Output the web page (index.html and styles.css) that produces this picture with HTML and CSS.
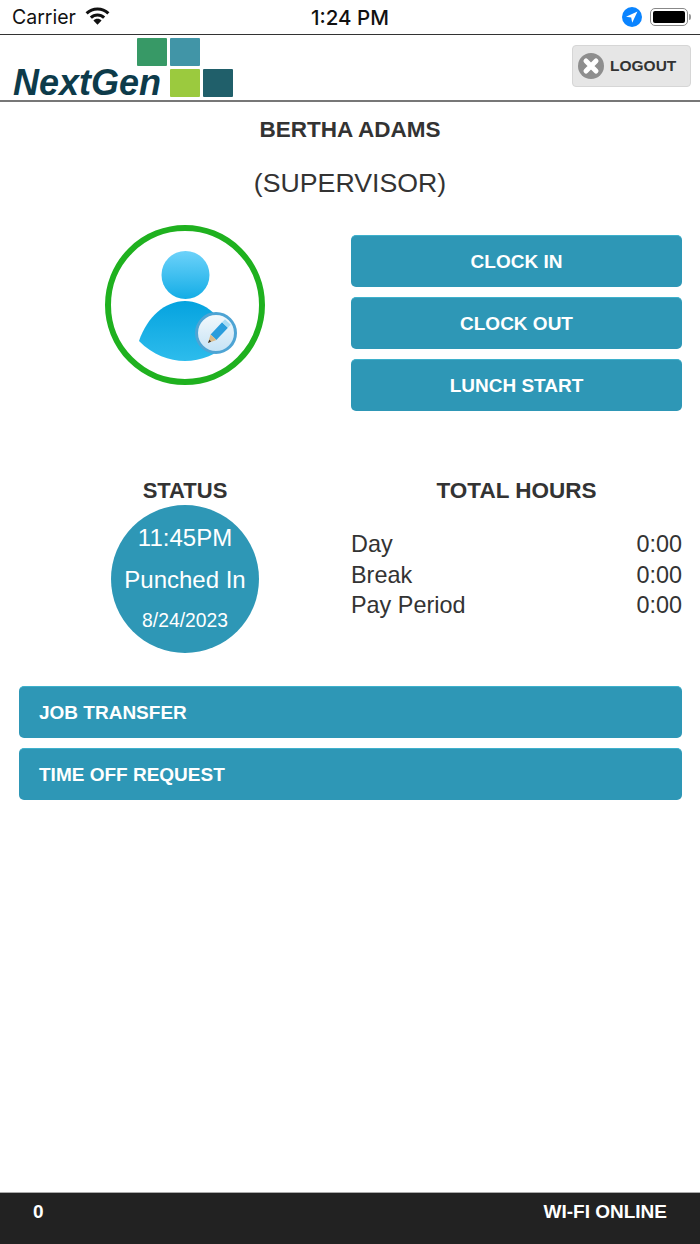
FILE: index.html
```html
<!doctype html>
<html lang="en">

<head>
    <meta charset="UTF-8" />
    <meta name="viewport" content="width=device-width, initial-scale=1.0" />
    <title>NextGen - Time Clock</title>
    <link rel="stylesheet" href="styles.css">
</head>

<body>
    <div class="app">
        <!-- Status bar -->
        <div class="status-bar">
            <div class="status-left">
                <span>Carrier</span>
                <svg class="wifi" viewBox="0 0 26 19" width="25" height="18">
                    <path d="M1.500 6.800A16.500 16.500 0 0 1 24.500 6.800" fill="none" stroke="#111" stroke-width="3.200" />
                    <path d="M6 11.200A10 10 0 0 1 20 11.200" fill="none" stroke="#111" stroke-width="3.200" />
                    <path d="M13 12.500c1.700 0 3.200.600 4.300 1.700L13 18.800l-4.300-4.600c1.100-1.100 2.600-1.700 4.300-1.700z" fill="#111" />
                </svg>
            </div>
            <div class="status-time">1:24 PM</div>
            <div class="status-right">
                <svg class="location" viewBox="0 0 20 20" width="20" height="20">
                    <circle cx="10" cy="10" r="10" fill="#0a84ff" />
                    <path d="M15.500 4.500L4 9.700l5.200.9 1 5.200z" fill="#fff" />
                </svg>
                <div class="battery">
                    <div class="battery-level"></div>
                </div>
                <div class="battery-cap"></div>
            </div>
        </div>

        <!-- Header -->
        <div class="app-header">
            <div class="logo">
                <div class="logo-name">NextGen</div>
                <div class="logo-blocks">
                    <span class="block block-green"></span>
                    <span class="block block-blue"></span>
                    <span class="block block-lime"></span>
                    <span class="block block-teal"></span>
                </div>
            </div>
            <button class="logout-button">
                <svg viewBox="0 0 26 26" width="26" height="26">
                    <circle cx="13" cy="13" r="13" fill="#8e8e8e" />
                    <path d="M8 8l10 10M18 8L8 18" stroke="#fff" stroke-width="5" stroke-linecap="round" />
                </svg>
                LOGOUT
            </button>
        </div>

        <!-- Employee -->
        <div class="employee-name">BERTHA ADAMS</div>
        <div class="employee-role">(SUPERVISOR)</div>

        <div class="clock-row">
            <div class="side-col">
                <div class="avatar">
                    <svg viewBox="0 0 160 160" width="160" height="160">
                        <defs>
                            <linearGradient id="headFill" x1="0" y1="0" x2="0" y2="1">
                                <stop offset="0" stop-color="#6dd2fa" />
                                <stop offset="1" stop-color="#14ade6" />
                            </linearGradient>
                            <linearGradient id="bodyFill" x1="0" y1="0" x2="0" y2="1">
                                <stop offset="0" stop-color="#05a3df" />
                                <stop offset="1" stop-color="#2dbcec" />
                            </linearGradient>
                            <linearGradient id="badgeFill" x1="0" y1="0" x2="0" y2="1">
                                <stop offset="0" stop-color="#f4f9fc" />
                                <stop offset="1" stop-color="#c4e2f5" />
                            </linearGradient>
                        </defs>
                        <circle cx="80" cy="80" r="77" fill="none" stroke="#1fb11f" stroke-width="6" />
                        <circle cx="80.500" cy="50" r="24" fill="url(#headFill)" />
                        <path d="M34 116C42 92 60 76 80 76s38 16 46 40C112 130 96 136 80 136s-32-6-46-20z" fill="url(#bodyFill)" />
                        <circle cx="111" cy="108" r="19.500" fill="url(#badgeFill)" stroke="#4ea4d4" stroke-width="3" />
                        <!-- pencil -->
                        <path d="M117.100 97.200l5.800 5.600-11.500 12.200-5.800-5.600z" fill="#2a9ddc" />
                        <path d="M120 94.200l5.800 5.600-2.900 3-5.800-5.600z" fill="#a8dcf5" />
                        <path d="M105.600 109.400l5.800 5.600-8.400 3z" fill="#d9b988" />
                        <path d="M104.300 114.700l1.900 1.900-3.200 1.400z" fill="#333" />
                    </svg>
                </div>
            </div>
            <div class="main-col clock-buttons">
                <button class="action-button">CLOCK IN</button>
                <button class="action-button">CLOCK OUT</button>
                <button class="action-button">LUNCH START</button>
            </div>
        </div>

        <div class="summary-row">
            <div class="side-col">
                <div class="section-title status-title">STATUS</div>
                <div class="status-circle">
                    <div class="status-clock">11:45PM</div>
                    <div class="status-label">Punched In</div>
                    <div class="status-date">8/24/2023</div>
                </div>
            </div>
            <div class="main-col">
                <div class="section-title">TOTAL HOURS</div>
                <div class="hours-list">
                    <div class="hours-row"><span>Day</span><span>0:00</span></div>
                    <div class="hours-row"><span>Break</span><span>0:00</span></div>
                    <div class="hours-row"><span>Pay Period</span><span>0:00</span></div>
                </div>
            </div>
        </div>

        <div class="wide-buttons">
            <button class="action-button wide">JOB TRANSFER</button>
            <button class="action-button wide">TIME OFF REQUEST</button>
        </div>

        <!-- Footer -->
        <div class="app-footer">
            <span>0</span>
            <span>WI-FI ONLINE</span>
        </div>
    </div>
</body>

</html>
```

FILE: styles.css
```css
* {
    box-sizing: border-box;
}

body {
    margin: 0;
    font-family: "Liberation Sans", Arial, sans-serif;
    color: #333;
    background: white;
}

.app {
    height: 1244px;
    display: flex;
    flex-direction: column;
}

button {
    font-family: inherit;
}

.status-bar {
    height: 35px;
    flex-shrink: 0;
    padding: 0 9px 0 12px;
    display: flex;
    align-items: center;
    justify-content: space-between;
    position: relative;
    border-bottom: 1px solid #333;
    color: #111;
    font-family: Inter, "Liberation Sans", sans-serif;
    font-size: 19.500px;
}

.status-left {
    display: flex;
    align-items: center;
    gap: 9px;
}

.wifi {
    margin-top: -3px;
}

.status-time {
    position: absolute;
    left: 0;
    right: 0;
    text-align: center;
    font-size: 20.500px;
    font-weight: 500;
}

.status-right {
    display: flex;
    align-items: center;
}

.location {
    margin-right: 8px;
}

.battery {
    width: 38px;
    height: 18px;
    padding: 2px;
    border: 1px solid #888;
    border-radius: 5px;
}

.battery-level {
    height: 100%;
    background: black;
    border-radius: 2px;
}

.battery-cap {
    width: 2px;
    height: 6px;
    margin-left: 1px;
    background: #999;
    border-radius: 0 2px 2px 0;
}

.app-header {
    height: 67px;
    flex-shrink: 0;
    padding: 0 9px 0 13px;
    display: flex;
    justify-content: space-between;
    border-bottom: 2px solid #777;
}

.logo {
    display: flex;
    align-items: flex-end;
}

.logo-name {
    width: 149px;
    font-size: 36px;
    line-height: 36px;
    margin-bottom: -1px;
    font-weight: bold;
    font-style: italic;
    color: #0d3b4a;
    white-space: nowrap;
}

/* stair-step squares; the lower row runs beside the wordmark */
.logo-blocks {
    display: grid;
    grid-template-columns: repeat(3, 30px);
    grid-template-rows: 28px 28px;
    column-gap: 3px;
    row-gap: 3px;
    padding-bottom: 3px;
    margin-left: -25px;
}

.block {
    border-radius: 1px;
}

.block-green {
    background: #379966;
}

.block-blue {
    background: #4195a7;
}

.block-lime {
    background: #9bca3e;
    grid-column: 2;
}

.block-teal {
    background: #205f6a;
}

.logout-button {
    width: 119px;
    height: 42px;
    margin-top: 10px;
    padding: 0 0 0 5px;
    display: flex;
    align-items: center;
    gap: 6px;
    background: #e6e6e6;
    border: 1px solid #d6d6d6;
    border-radius: 4px;
    color: #333;
    font-size: 15.500px;
    font-weight: bold;
}

.employee-name {
    margin-top: 15px;
    text-align: center;
    font-size: 22.500px;
    line-height: 26px;
    font-weight: bold;
}

.employee-role {
    margin-top: 25px;
    text-align: center;
    font-size: 26.700px;
    line-height: 30px;
}

.clock-row {
    margin-top: 27px;
    display: flex;
}

.side-col {
    width: 351px;
    flex-shrink: 0;
    padding-left: 19px;
    display: flex;
    flex-direction: column;
    align-items: center;
}

.main-col {
    width: 331px;
}

.avatar {
    width: 160px;
    height: 160px;
}

.clock-buttons {
    padding-top: 10px;
}

.action-button {
    display: block;
    width: 100%;
    height: 52px;
    margin-bottom: 10px;
    background: #2e97b6;
    border: 0;
    border-top: 1px solid #3eb1cc;
    border-radius: 5px;
    color: white;
    font-size: 19px;
    font-weight: bold;
    text-align: center;
}

.summary-row {
    margin-top: 57px;
    display: flex;
}

.section-title {
    text-align: center;
    font-size: 22.500px;
    line-height: 26px;
    font-weight: bold;
}

.status-title {
    font-size: 22px;
}

.status-circle {
    width: 148px;
    height: 148px;
    margin-top: 1px;
    border-radius: 50%;
    background: #2e97b6;
    color: white;
    text-align: center;
}

.status-clock {
    padding-top: 19px;
    font-size: 24px;
    line-height: 28px;
}

.status-label {
    margin-top: 14px;
    font-size: 24px;
    line-height: 28px;
}

.status-date {
    margin-top: 15px;
    font-size: 19.300px;
    line-height: 24px;
}

.hours-list {
    margin-top: 25px;
}

.hours-row {
    display: flex;
    justify-content: space-between;
    font-size: 23.400px;
    line-height: 30.500px;
}

.wide-buttons {
    margin-top: 33px;
    padding: 0 18px 0 19px;
}

.action-button.wide {
    text-align: left;
    padding-left: 20px;
}

.app-footer {
    height: 52px;
    margin-top: auto;
    padding: 0 33px 14px 33px;
    display: flex;
    align-items: center;
    justify-content: space-between;
    background: #222;
    border-top: 1px solid #aaa;
    color: white;
    font-size: 19px;
    font-weight: bold;
}
```
